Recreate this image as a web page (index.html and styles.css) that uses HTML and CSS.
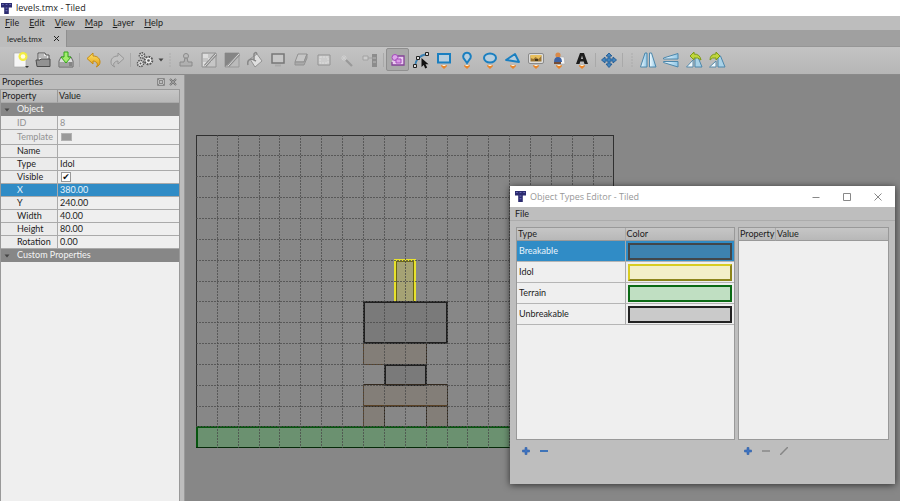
FILE: index.html
```html
<!DOCTYPE html>
<html lang="en">
<head>
<meta charset="utf-8">
<title>levels.tmx - Tiled</title>
<link rel="stylesheet" href="styles.css">
</head>
<body>
<svg class="defs" aria-hidden="true">
  <defs>
    <linearGradient id="glass" x1="0" x2="1"><stop offset="0" stop-color="#f2fbff"/><stop offset="1" stop-color="#8fc6e6"/></linearGradient>
    <linearGradient id="gold" x1="0" x2="0" y1="0" y2="1"><stop offset="0" stop-color="#ffe46a"/><stop offset="1" stop-color="#e09a10"/></linearGradient>
    <symbol id="tiled" viewBox="0 0 12 12"><path d="M0 0h12v5H8.500v7h-5V5H0z" fill="#2b2b70"/><path d="M1 1h2v1H1zM5 1h2v1H5zM9 1h2v1H9zM5 5h2v1H5zM5 8h2v1H5z" fill="#7b7bc4"/></symbol>
    <symbol id="drop" viewBox="0 0 6 4"><path d="M.3 0h5.4v1.5L3 4 .3 1.500z" fill="#e9852b"/><path d="M1.500 0h3v1h-3z" fill="#fff0d0"/></symbol>
    <symbol id="plus" viewBox="0 0 8 8"><path d="M3 .5h2V3h2.500v2H5v2.500H3V5H.5V3H3z" fill="#3f74c0" stroke="#2f5fa8" stroke-width=".6"/></symbol>
  </defs>
</svg>
<div class="app">
  <header class="titlebar"><svg class="logo"><use href="#tiled"/></svg><h1>levels.tmx - Tiled</h1></header>
  <nav class="menubar" aria-label="Main menu">
    <button><u>F</u>ile</button><button><u>E</u>dit</button><button><u>V</u>iew</button><button><u>M</u>ap</button><button><u>L</u>ayer</button><button><u>H</u>elp</button>
  </nav>
  <div class="tabs"><div class="tab"><span>levels.tmx</span><button aria-label="Close tab"><svg viewBox="0 0 7 7"><path d="M1 1l5 5M6 1L1 6" stroke="#222"/></svg></button></div></div>

  <div class="toolbar" role="toolbar" aria-label="Tools">
    <button aria-label="New"><svg viewBox="0 0 18 18"><path d="M3 2h12v14H3z" fill="#f6f6f6" stroke="#aaa" stroke-width=".7"/><circle cx="12" cy="5.500" r="4.500" fill="#f3ec43"/><circle cx="12" cy="5.500" r="2.300" fill="#fffde0"/><path d="M14 15h4l-2 2z" fill="#333"/></svg></button>
    <button aria-label="Open"><svg viewBox="0 0 18 18"><path d="M4 9V2h7l1 2h3v6" fill="#e8e8e8" stroke="#555"/><path d="M5 4h5M5 6h8" stroke="#888"/><path d="M2 9h4l1-1h9v7.500H3z" fill="#929292" stroke="#4c4c4c"/></svg></button>
    <button aria-label="Save"><svg viewBox="0 0 18 18"><path d="M2 10l2-4h10l2 4v6H2z" fill="#ddd" stroke="#666"/><path d="M2.500 11h13v4.500h-13z" fill="#858585"/><path d="M3 12h9M3 14h9" stroke="#ddd" stroke-width=".7"/><path d="M7 1h4v5h3l-5 6-5-6h3z" fill="#a2ed6d" stroke="#35a51c"/></svg></button>
    <i class="sep"></i>
    <button aria-label="Undo"><svg viewBox="0 0 18 18"><path d="M8 2v3c5 0 7 3 7 6 0 2-1 4-4 5 1-1 2-2 1-4-1-1-2-2-4-2v3L2 7.500z" fill="url(#gold)" stroke="#c58b13"/></svg></button>
    <button aria-label="Redo"><svg viewBox="0 0 18 18"><path d="M10 2v3c-5 0-7 3-7 6 0 2 1 4 4 5-1-1-2-2-1-4 1-1 2-2 4-2v3l6-5.500z" fill="#c2c2c2" stroke="#969696"/></svg></button>
    <i class="sep"></i>
    <button class="wide" aria-label="Commands"><svg viewBox="0 0 18 18"><g fill="#ededed" stroke="#555"><circle cx="6" cy="4.500" r="2.600" stroke-width="1.600" stroke-dasharray="1.500 .8"/><circle cx="4.500" cy="12.500" r="3" stroke-width="1.600" stroke-dasharray="1.500 .8"/><circle cx="12.500" cy="9.500" r="3.800" stroke-width="1.900" stroke-dasharray="1.900 1"/></g><g fill="#555"><circle cx="6" cy="4.500" r=".9"/><circle cx="4.500" cy="12.500" r="1"/><circle cx="12.500" cy="9.500" r="1.300"/></g></svg><svg class="arrow" viewBox="0 0 6 4"><path d="M.5.5h5L3 3.500z" fill="#444"/></svg></button>
    <i class="sep grip"></i>
    <button disabled aria-label="Stamp Brush"><svg viewBox="0 0 18 18"><circle cx="9" cy="5" r="2.500" fill="#bbb" stroke="#8a8a8a"/><path d="M8 7h2l1 4h4v4H3v-4h4z" fill="#b0b0b0" stroke="#8a8a8a"/></svg></button>
    <button disabled aria-label="Terrain Brush"><svg viewBox="0 0 18 18"><path d="M2 2h14v14H2z" fill="#c6c6c6" stroke="#929292"/><path d="M3 3h5v4H3zM8 7h4v4H8zM3 11h4v4H3z" fill="#dedede"/><path d="M5 15L16 3" stroke="#8b8b8b" stroke-width="3"/><path d="M5 15L16 3" stroke="#ddd"/></svg></button>
    <button disabled aria-label="Wang Brush"><svg viewBox="0 0 18 18"><path d="M2 2h14v14H2z" fill="#bbb" stroke="#999"/><path d="M2 2h14L2 16z" fill="#858585"/><path d="M5 15L16 3" stroke="#8b8b8b" stroke-width="3"/><path d="M5 15L16 3" stroke="#ddd"/></svg></button>
    <button disabled aria-label="Bucket Fill"><svg viewBox="0 0 18 18"><path d="M4 8l7-5 5 7-7 6z" fill="#dfdfdf" stroke="#929292"/><path d="M2 14c-1-4 1-6 4-6l4 2M8 9V3q2-3 3 0" fill="none" stroke="#888" stroke-width="1.500"/></svg></button>
    <button disabled aria-label="Shape Fill"><svg viewBox="0 0 18 18"><path d="M3 3h12v9H3z" fill="#c7c7c7" stroke="#777" stroke-width="1.500"/><path d="M6 14.500h6" stroke="#aaa" stroke-width="2"/></svg></button>
    <button disabled aria-label="Eraser"><svg viewBox="0 0 18 18"><path d="M6 3h9l-3 8H3z" fill="#c6c6c6" stroke="#929292"/><path d="M3 11h9l3-8v4l-3 7H3z" fill="#aaa" stroke="#929292"/></svg></button>
    <button disabled aria-label="Rectangular Select"><svg viewBox="0 0 18 18"><path d="M3 4h12v10H3z" fill="#ccc" stroke="#929292"/><path d="M5 6h8v6H5z" fill="none" stroke="#ddd" stroke-dasharray="2 1"/></svg></button>
    <button disabled aria-label="Magic Wand"><svg viewBox="0 0 18 18"><path d="M8 9l6 6" stroke="#999" stroke-width="2.200"/><path d="M6 4v6M3 7h6M4 5l4 4M8 5L4 9" stroke="#cfcfcf"/></svg></button>
    <button disabled aria-label="Select Same Tile"><svg viewBox="0 0 18 18"><path d="M11 3h5v13h-5z" fill="#8c8c8c"/><path d="M12 7h3M12 11h3" stroke="#bbb"/><path d="M2 5h5v4H2zM7 7h5" fill="#ccc" stroke="#a2a2a2"/></svg></button>
    <i class="sep"></i>
    <button class="active" aria-label="Select Objects" aria-pressed="true"><svg viewBox="0 0 18 18"><path d="M5 5h10v9H3v-3" fill="#eacbf0" stroke="#844398" stroke-width="1.300"/><circle cx="6" cy="6.500" r="3" fill="#dda5ea" stroke="#a34dba"/><path d="M7 8h5v4H7z" fill="#dc9be8" stroke="#a34dba"/></svg></button>
    <button aria-label="Edit Polygons"><svg viewBox="0 0 18 18"><path d="M3 15Q4 5 15 3" fill="none" stroke="#397fb0" stroke-width="1.800"/><path d="M1.500 13.500h3v3h-3zM4.500 5.500h3v3h-3zM13.500 1.500h3v3h-3z" fill="#ddd" stroke="#222"/><path d="M9.500 7v9l2.200-2 1.500 3.500 2-1-1.700-3.200h3z" fill="#111"/></svg></button>
    <button aria-label="Insert Rectangle"><svg viewBox="0 0 18 18"><path d="M3 3h12v8.500H3z" fill="#b8cedd" stroke="#1a7fc0" stroke-width="2"/><use href="#drop" x="6" y="14" width="6" height="4"/></svg></button>
    <button aria-label="Insert Point"><svg viewBox="0 0 18 18"><path d="M9 12L5.500 7a3.800 3.800 0 1 1 7 0z" fill="#b8cedd" stroke="#1a7fc0" stroke-width="2"/><use href="#drop" x="6" y="14" width="6" height="4"/></svg></button>
    <button aria-label="Insert Ellipse"><svg viewBox="0 0 18 18"><ellipse cx="9" cy="7" rx="6" ry="4.500" fill="#b8cedd" stroke="#1a7fc0" stroke-width="2"/><use href="#drop" x="6" y="14" width="6" height="4"/></svg></button>
    <button aria-label="Insert Polygon"><svg viewBox="0 0 18 18"><path d="M2 9l9-6 4 8z" fill="#b8cedd" stroke="#1a7fc0" stroke-width="1.900" stroke-linejoin="round"/><use href="#drop" x="6" y="14" width="6" height="4"/></svg></button>
    <button aria-label="Insert Tile"><svg viewBox="0 0 18 18"><rect x="1.500" y="2.500" width="15" height="10" rx="1.500" fill="#ddd" stroke="#8a8a8a"/><path d="M3.500 4.500h11v6h-11z" fill="#9b7431"/><path d="M3.500 7l3 1 2-2 3 2 3-3v-1h-11z" fill="#e8bf5d"/><path d="M8 8h3v2H8z" fill="#453519"/><use href="#drop" x="6" y="14" width="6" height="4"/></svg></button>
    <button aria-label="Insert Template"><svg viewBox="0 0 18 18"><path d="M9 6h5l1 7H8z" fill="#f6f6f6" stroke="#aaa" stroke-width=".6"/><circle cx="8" cy="4" r="2.600" fill="#d98a4a"/><path d="M4 11q0-5 4-5t4 5z" fill="#3d63a4"/><path d="M4 11h7v2H4z" fill="#734d39"/><use href="#drop" x="6" y="14" width="6" height="4"/></svg></button>
    <button aria-label="Insert Text"><svg viewBox="0 0 18 18"><path d="M3 13L7 2h4l4 11h-3.500l-.8-2.500H7.200L6.500 13zM8 8h2L9 4.500z" fill="#1c1c1c" fill-rule="evenodd"/><use href="#drop" x="6" y="14" width="6" height="4"/></svg></button>
    <i class="sep thin"></i>
    <button aria-label="Offset Layers"><svg viewBox="0 0 18 18"><path d="M9 2l3 3h-2v3h3V6l3.500 3-3.500 3v-2h-3v3h2l-3 3.500L6 13h2v-3H5v2L1.500 9 5 6v2h3V5H6z" fill="#4284bd" stroke="#235b94" stroke-width=".9"/></svg></button>
    <i class="sep"></i><i class="sep grip"></i>
    <button aria-label="Flip Horizontally"><svg viewBox="0 0 18 18"><path d="M8 2v14H1.500L6 2z" fill="url(#glass)" stroke="#4d87ab"/><path d="M10.500 2v14H17L12.500 2z" fill="url(#glass)" stroke="#4d87ab"/></svg></button>
    <button aria-label="Flip Vertically"><svg viewBox="0 0 18 18"><path d="M16 8H1.500v-1L16 2.500z" fill="url(#glass)" stroke="#4d87ab"/><path d="M16 10.500H1.500v1L16 16z" fill="url(#glass)" stroke="#4d87ab"/></svg></button>
    <button aria-label="Rotate Left"><svg viewBox="0 0 18 18"><path d="M8 9v7H1.500z" fill="#f2fafd" stroke="#5689a9"/><path d="M10 5v11h7L12.500 5z" fill="#a9d2e7" stroke="#4d87ab"/><path d="M5 5l4-4v2q6 0 7 6-3-3-7-2v2z" fill="#bfd63c" stroke="#7e9a18"/></svg></button>
    <button aria-label="Rotate Right"><svg viewBox="0 0 18 18"><path d="M10 5v11h7L12.500 5z" fill="#a9d2e7" stroke="#4d87ab"/><path d="M8 10v6H1.500z" fill="#f2fafd" stroke="#5689a9"/><path d="M12 5L8 1v2Q2 3 2 9q2-3 6-2v2z" fill="#bfd63c" stroke="#7e9a18"/></svg></button>
  </div>

  <main class="workspace">
    <aside class="properties">
      <div class="panel-title"><h2>Properties</h2>
        <button aria-label="Float panel"><svg viewBox="0 0 8 8"><path d="M.5.5h7v7h-7zM2.500 2.500h3v3h-3zM1 1l2 2M7 1L5 3M1 7l2-2M7 7L5 5" fill="none" stroke="#888"/></svg></button>
        <button aria-label="Close panel"><svg viewBox="0 0 8 8"><path d="M1 1l6 6M7 1L1 7" stroke="#707070" stroke-width="2"/><path d="M1 1l6 6M7 1L1 7" stroke="#bbb" stroke-width=".6"/></svg></button>
      </div>
      <div class="sheet">
        <table class="props">
          <thead><tr><th class="name">Property</th><th>Value</th></tr></thead>
          <tbody>
            <tr class="group"><th colspan="2"><svg class="arrow" viewBox="0 0 6 4"><path d="M.5.5h5L3 3.500z" fill="#444"/></svg>Object</th></tr>
            <tr class="muted"><td>ID</td><td>8</td></tr>
            <tr class="muted tall"><td>Template</td><td><span class="chip"></span></td></tr>
            <tr><td>Name</td><td></td></tr>
            <tr><td>Type</td><td>Idol</td></tr>
            <tr><td><label for="visible">Visible</label></td><td><input type="checkbox" id="visible" checked></td></tr>
            <tr class="selected"><td>X</td><td>380.00</td></tr>
            <tr><td>Y</td><td>240.00</td></tr>
            <tr><td>Width</td><td>40.00</td></tr>
            <tr><td>Height</td><td>80.00</td></tr>
            <tr><td>Rotation</td><td>0.00</td></tr>
            <tr class="group"><th colspan="2"><svg class="arrow" viewBox="0 0 6 4"><path d="M.5.5h5L3 3.500z" fill="#444"/></svg>Custom Properties</th></tr>
          </tbody>
        </table>
      </div>
    </aside>
    <section class="canvas" aria-label="Map">
      <svg class="map" viewBox="0 0 418 314" shape-rendering="crispEdges">
        <path d="M.5.5h417v312H.5z" fill="none" stroke="#303030"/>
        <path d="M199 167v-42h20v42" fill="#d8cf58" fill-opacity=".38" stroke="#e8e22c" stroke-width="2"/>
        <path d="M200.500 166v-39.500h17V166" fill="none" stroke="#6b6718"/>
        <g fill="#7b6d5a" fill-opacity=".34" stroke="#5a4226">
          <path d="M167.500 208.500h63v21h-63zM167.500 249.500h84v21h-84zM167.500 270.500h21v21h-21zM230.500 270.500h21v21h-21z"/>
        </g>
        <path d="M230.500 209v20M251.500 250v42M188.500 271v20M230.500 271v20" stroke="#302519"/>
        <g fill="#666" fill-opacity=".4" stroke="#202020" stroke-width="2"><path d="M168 167h83v41h-83zM189 230h41v20h-41z"/></g>
        <path d="M168 249.500h84M168 271h84" stroke="#33291e"/>
        <path d="M1 292h416v20H1z" fill="#46a050" fill-opacity=".42"/>
        <path d="M0 292h418" stroke="#07550f" stroke-width="2"/><path d="M1 291v22" stroke="#07550f" stroke-width="2"/><path d="M0 312.500h418" stroke="#062b09"/>
        <g fill="none" stroke="#4a4a4a" stroke-opacity=".78" stroke-dasharray="2 1">
          <path d="M21.500 0v313M42.500 0v313M63.500 0v313M83.500 0v313M104.500 0v313M125.500 0v313M146.500 0v313M167.500 0v313M188.500 0v313M209.500 0v313M230.500 0v313M251.500 0v313M271.500 0v313M292.500 0v313M313.500 0v313M334.500 0v313M355.500 0v313M376.500 0v313M397.500 0v313"/>
          <path d="M0 20.500h417M0 41.500h417M0 62.500h417M0 83.500h417M0 104.500h417M0 125.500h417M0 146.500h417M0 166.500h417M0 187.500h417M0 208.500h417M0 229.500h417M0 250.500h417M0 271.500h417M0 291.500h417"/>
        </g>
      </svg>
    </section>
  </main>

  <section class="dialog" role="dialog" aria-labelledby="dialog-title">
    <header class="dialog-title"><svg class="logo"><use href="#tiled"/></svg><h2 id="dialog-title">Object Types Editor - Tiled</h2>
      <button aria-label="Minimize"><svg viewBox="0 0 8 8"><path d="M.5 4.500h7" stroke="#888"/></svg></button>
      <button aria-label="Maximize"><svg viewBox="0 0 8 8"><path d="M.5.5h7v7h-7z" fill="none" stroke="#888"/></svg></button>
      <button aria-label="Close"><svg viewBox="0 0 8 8"><path d="M.5.5l7 7M7.500.5l-7 7" stroke="#888"/></svg></button>
    </header>
    <nav class="dialog-menu" aria-label="Dialog menu"><button>File</button></nav>
    <div class="panes">
      <div class="pane">
        <div class="sheet">
          <table class="types">
            <thead><tr><th>Type</th><th>Color</th></tr></thead>
            <tbody>
              <tr class="selected"><td>Breakable</td><td><button class="swatch breakable" aria-label="Breakable color"></button></td></tr>
              <tr><td>Idol</td><td><button class="swatch idol" aria-label="Idol color"></button></td></tr>
              <tr><td>Terrain</td><td><button class="swatch terrain" aria-label="Terrain color"></button></td></tr>
              <tr><td>Unbreakable</td><td><button class="swatch unbreakable" aria-label="Unbreakable color"></button></td></tr>
            </tbody>
          </table>
        </div>
        <div class="actions"><button aria-label="Add type"><svg><use href="#plus"/></svg></button><button aria-label="Remove type"><svg viewBox="0 0 8 8"><path d="M0 3h8v2H0z" fill="#3f74b8"/></svg></button></div>
      </div>
      <div class="pane">
        <div class="sheet">
          <table class="custom"><thead><tr><th>Property</th><th>Value</th></tr></thead></table>
        </div>
        <div class="actions"><button aria-label="Add property"><svg><use href="#plus"/></svg></button><button aria-label="Remove property" disabled><svg viewBox="0 0 8 8"><path d="M0 3h8v2H0z" fill="#969696"/></svg></button><button aria-label="Rename property" disabled><svg viewBox="0 0 8 8"><path d="M0 8l8-8" stroke="#868686" stroke-width="1.500"/></svg></button></div>
      </div>
    </div>
  </section>
</div>
</body>
</html>
```
FILE: styles.css
```css
* { box-sizing: border-box; }
body { margin: 0; font: 9px/12px Lato, "Open Sans", sans-serif; color: #1c1c1c; }
button { display: flex; align-items: center; justify-content: center; margin: 0; padding: 0; border: 0; background: none; font: inherit; color: inherit; }
h1, h2 { margin: 0; font: inherit; }
svg { display: block; flex: none; }
table { width: 100%; border-collapse: separate; border-spacing: 0; table-layout: fixed; }
th { font-weight: 400; text-align: left; }
.defs { position: absolute; width: 0; height: 0; }

.app { position: relative; display: flex; flex-direction: column; height: 100vh; overflow: hidden; background: #bdbdbd; }
.logo { width: 11px; height: 11px; }
.titlebar { display: flex; align-items: center; gap: 4px; height: 16px; padding: 0 1px; background: #fff; }
.titlebar h1, .dialog-title h2 { font-family: "Open Sans", sans-serif; }
.menubar { display: flex; gap: 10px; height: 14px; padding: 0 5px; }
.menubar u { text-underline-offset: 1px; }

.tabs { display: flex; height: 17px; background: #a0a0a0; border-bottom: 1px solid #969696; }
.tab { display: flex; align-items: center; justify-content: space-between; gap: 11px; height: 17px; padding: 0 6px 0 7px; background: #bdbdbd; border-right: 1px solid #8f8f8f; font-size: 8px; }
.tab svg { width: 7px; height: 7px; }

.toolbar { display: flex; align-items: center; height: 28px; padding: 0 0 2px 8px; background: linear-gradient(#c3c3c3, #b6b6b6); border-bottom: 1px solid #8a8a8a; }
.toolbar button { width: 23px; height: 23px; flex: none; }
.toolbar svg { width: 18px; height: 18px; }
.toolbar .wide { width: 33px; gap: 4px; }
.toolbar .arrow { width: 6px; height: 4px; }
.toolbar .active { background: #a9a9a9; border: 1px solid #8f8f8f; border-radius: 2px; }
.sep { flex: none; width: 5px; height: 14px; background: linear-gradient(#a9a9a9, #a9a9a9) center / 1px 100% no-repeat; }
.sep.thin { width: 4px; }
.sep.grip { width: 8px; background: radial-gradient(circle, #999 1px, transparent 1px) center / 3px 3px; background-clip: content-box; padding: 0 2px; }
.sep + .grip { margin-left: 3px; }

.workspace { display: flex; flex: 1; min-height: 0; }
.properties { display: flex; flex-direction: column; flex: none; width: 185px; padding-right: 4px; border-right: 1px solid #999; }
.panel-title { display: flex; align-items: center; gap: 4px; height: 14px; padding: 0 3px 0 2px; }
.panel-title h2 { flex: 1; }
.panel-title svg { width: 8px; height: 8px; }
.sheet { flex: 1; min-height: 0; background: #efefef; border: 1px solid #999; border-width: 1px 1px 0; }
.props th, .props td { height: 13px; padding: 0 2px; line-height: 12px; border-bottom: 1px solid #aaa; }
.props thead th { padding-left: 1px; background: linear-gradient(#c6c6c6, #b8b8b8); }
.props .name { width: 57px; }
.props td { white-space: nowrap; }
.props td:first-child { padding-left: 16px; border-right: 1px solid #aaa; background: #ebebeb; }
.props .name { border-right: 1px solid #999; }
.props .group th { background: #878787; color: #f4f4f4; border-bottom-color: #878787; padding-left: 3px; }
.group .arrow { display: inline-block; width: 6px; height: 4px; margin-right: 7px; vertical-align: middle; }
.props .muted td { height: 14px; color: #929292; }
.props .tall td { height: 15px; }
.chip { display: block; width: 11px; height: 8px; background: #9a9a9a; border: 1px solid #b2b2b2; margin: 0 1px; }
.props .selected td, .types .selected td { background: #308cc6; color: #e8f4fc; }
.props input { display: grid; place-items: center; appearance: none; width: 10px; height: 10px; margin: 1px; border: 1px solid #999; background: #fff; }
.props input:checked::after { content: "✔"; font: 9px/8px "DejaVu Sans", sans-serif; color: #111; }

.canvas { flex: 1; min-width: 0; padding: 60px 11px; background: #878787; overflow: hidden; }
.map { width: 418px; height: 314px; }

.dialog { position: absolute; top: 186px; right: 5px; bottom: 17px; left: 510px; display: flex; flex-direction: column; background: #bebebe; box-shadow: 0 1px 7px rgba(0, 0, 0, .65); }
.dialog-title { display: flex; align-items: center; height: 21px; padding: 0 2px 0 5px; background: #fff; color: #989898; }
.dialog-title h2 { flex: 1; margin-left: 4px; }
.dialog-title button { width: 31px; height: 21px; }
.dialog-title button svg { width: 8px; height: 8px; }
.dialog-menu { display: flex; height: 14px; padding-left: 5px; border-bottom: 1px solid #acacac; }
.panes { display: flex; flex: 1; gap: 3px; padding: 6px 6px 23px; }
.pane { display: flex; flex-direction: column; flex: 219; min-width: 0; }
.pane + .pane { flex: 151; }
.pane .sheet { border-width: 1px; }
.types thead th, .custom th { height: 13px; padding: 0 1px; background: linear-gradient(#c6c6c6, #b8b8b8); border-right: 1px solid #aaa; border-bottom: 1px solid #999; }
.custom th:first-child { width: 37px; }
.types td { height: 21px; padding: 0 2px; border-right: 1px solid #aaa; border-bottom: 1px solid #b5b5b5; }
.types th:last-child, .types td:last-child, .custom th:last-child { border-right: 0; }
.swatch { width: 100%; height: 17px; border: 2px solid; }
.breakable { background: #3d82af; border-color: #42464a; }
.idol { background: #f3efc8; border-color: #d8cc22 #8d851b #8d851b #d8cc22; }
.terrain { background: #c0dfc2; border-color: #0b6a14; }
.unbreakable { background: #cacaca; border-color: #222; }
.actions { display: flex; gap: 10px; height: 21px; padding: 0 6px; }
.actions svg { width: 8px; height: 8px; }
```
